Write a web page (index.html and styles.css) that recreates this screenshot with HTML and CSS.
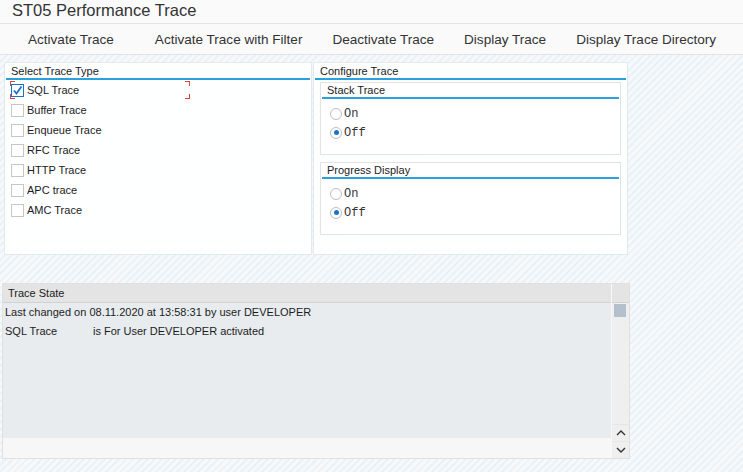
FILE: index.html
```html
<!DOCTYPE html>
<html lang="en">
<head>
  <meta charset="UTF-8" />
  <title>ST05 Performance Trace</title>
  <link rel="stylesheet" href="styles.css">
</head>
<body>
  <div class="title">ST05 Performance Trace</div>
  <div class="toolbar">
    <span class="tb-btn first">Activate Trace</span>
    <span class="tb-btn">Activate Trace with Filter</span>
    <span class="tb-btn">Deactivate Trace</span>
    <span class="tb-btn">Display Trace</span>
    <span class="tb-btn">Display Trace Directory</span>
  </div>

  <div class="panels">
    <!-- trace type selection -->
    <div class="panel panel-types">
      <div class="panel-head">Select Trace Type</div>
      <div class="check-list">
        <div class="check-row focused">
          <span class="cbox checked">
            <svg width="11" height="11" viewBox="0 0 11 11"><path d="M2 5.5 L4.5 8.5 L9.5 1.5" fill="none" stroke="#1a73c8" stroke-width="1.8"/></svg>
          </span>SQL Trace
          <span class="focus-frame"></span>
        </div>
        <div class="check-row"><span class="cbox"></span>Buffer Trace</div>
        <div class="check-row"><span class="cbox"></span>Enqueue Trace</div>
        <div class="check-row"><span class="cbox"></span>RFC Trace</div>
        <div class="check-row"><span class="cbox"></span>HTTP Trace</div>
        <div class="check-row"><span class="cbox"></span>APC trace</div>
        <div class="check-row"><span class="cbox"></span>AMC Trace</div>
      </div>
    </div>

    <!-- trace options -->
    <div class="panel panel-config">
      <div class="panel-head">Configure Trace</div>
      <div class="group">
        <div class="group-head">Stack Trace</div>
        <div class="radio-row"><span class="radio"></span><span class="opt">On</span></div>
        <div class="radio-row"><span class="radio on"></span><span class="opt">Off</span></div>
      </div>
      <div class="group">
        <div class="group-head">Progress Display</div>
        <div class="radio-row"><span class="radio"></span><span class="opt">On</span></div>
        <div class="radio-row"><span class="radio on"></span><span class="opt">Off</span></div>
      </div>
    </div>
  </div>

  <!-- current state output -->
  <div class="state">
    <div class="state-main">
      <div class="state-head">Trace State</div>
      <div class="state-body">
        <div class="state-line">Last changed on 08.11.2020 at 13:58:31 by user DEVELOPER</div>
        <div class="state-line"><span class="state-name">SQL Trace</span>is For User DEVELOPER activated</div>
      </div>
      <div class="state-foot"></div>
    </div>
    <div class="state-scroll">
      <div class="scroll-head"></div>
      <div class="scroll-track"><span class="scroll-thumb"></span></div>
      <div class="scroll-btn">
        <svg width="10" height="6" viewBox="0 0 10 6"><path d="M1 5 L5 1 L9 5" fill="none" stroke="#333" stroke-width="1.4"/></svg>
      </div>
      <div class="scroll-btn">
        <svg width="10" height="6" viewBox="0 0 10 6"><path d="M1 1 L5 5 L9 1" fill="none" stroke="#333" stroke-width="1.4"/></svg>
      </div>
    </div>
  </div>
</body>
</html>
```

FILE: styles.css
```css
body {
  margin: 0; height: 472px; overflow: hidden;
  font-family: 'Liberation Sans', Arial, sans-serif; font-size: 11px; color: #1c1c1c;
  background: repeating-linear-gradient(135deg, #f5f9fc 0 3px, #eaf2f8 3px 5px);
}
.title {
  height: 23px; line-height: 20px; padding-left: 12px;
  font-size: 16.5px; color: #333; background: #fafafa;
  border-bottom: 1px solid #e4e4e4;
}
.toolbar {
  height: 30px; display: flex; align-items: center; padding-left: 13px;
  background: #fafafa; border-bottom: 1px solid #e2e2e2;
  font-size: 13.55px; color: #333;
}
.tb-btn { padding: 0 15px; white-space: nowrap; }
.tb-btn.first { margin-right: 11px; }

.panels { display: flex; gap: 1px; margin: 7px 0 0 4px; }
.panel {
  height: 191px; border: 1px solid #e6e9ec;
  background: rgba(255, 255, 255, 0.88);
}
.panel-types { width: 306px; }
.panel-config { width: 313px; }
.panel-head {
  margin: 0 1px; padding-left: 5px; height: 15px; line-height: 16px;
  border-bottom: 2px solid #2aa0dd;
}
.check-list { padding-left: 6px; }
.check-row { position: relative; height: 20px; display: flex; align-items: center; }
.cbox {
  width: 11px; height: 11px; margin-right: 3px;
  border: 1px solid #c6c6c6; background: #fff;
  display: flex; align-items: center; justify-content: center;
}
.cbox.checked { border-color: #1a73c8; }
.focus-frame {
  position: absolute; left: -1px; top: 1px; width: 180px; height: 18px;
  background:
    linear-gradient(#e0453b, #e0453b) left top / 5px 1px no-repeat,
    linear-gradient(#e0453b, #e0453b) left top / 1px 5px no-repeat,
    linear-gradient(#e0453b, #e0453b) right top / 5px 1px no-repeat,
    linear-gradient(#e0453b, #e0453b) right top / 1px 5px no-repeat,
    linear-gradient(#e0453b, #e0453b) left bottom / 5px 1px no-repeat,
    linear-gradient(#e0453b, #e0453b) left bottom / 1px 5px no-repeat,
    linear-gradient(#e0453b, #e0453b) right bottom / 5px 1px no-repeat,
    linear-gradient(#e0453b, #e0453b) right bottom / 1px 5px no-repeat;
}

.group {
  height: 71px; margin: 2px 6px 7px 6px;
  border: 1px solid #e3e3e3; background: #fff;
}
.group-head {
  margin: 0 1px; padding-left: 5px; height: 14px; line-height: 15px;
  border-bottom: 2px solid #2aa0dd;
}
.radio-row { height: 19px; display: flex; align-items: center; padding-left: 9px; }
.group-head + .radio-row { margin-top: 5px; }
.radio {
  width: 10px; height: 10px; border: 1px solid #bdbdbd; border-radius: 50%;
  background: #fff; margin-right: 2px; position: relative;
}
.radio.on::after {
  content: ""; position: absolute; left: 2.5px; top: 2.5px;
  width: 5px; height: 5px; border-radius: 50%; background: #1a73c8;
}
.opt { font-family: 'Liberation Mono', monospace; font-size: 12px; color: #333; }

.state {
  display: flex; width: 626px; height: 174px; margin: 28px 0 0 2px;
  border: 1px solid #e0e0e0;
}
.state-main { flex: 1; display: flex; flex-direction: column; }
.state-head {
  height: 18px; line-height: 19px; padding-left: 5px;
  background: #e4e4e4; border-bottom: 1px solid #d2d2d2;
}
.state-body { flex: 1; background: #e8ecef; }
.state-line { height: 19px; line-height: 19px; padding-left: 2px; white-space: nowrap; }
.state-name { display: inline-block; width: 88px; }
.state-foot { height: 20px; background: #f7f7f7; }
.state-scroll {
  width: 17px; border-left: 1px solid #f8f8f8; background: #efefef;
  display: flex; flex-direction: column;
}
.scroll-head { height: 18px; background: #e4e4e4; border-bottom: 1px solid #d2d2d2; }
.scroll-track { flex: 1; padding: 1px 0 0 2px; }
.scroll-thumb { display: block; width: 12px; height: 13px; background: #b4c0cc; }
.scroll-btn {
  height: 16px; border-top: 1px solid #e6e6e6;
  display: flex; align-items: center; justify-content: center;
}
```
